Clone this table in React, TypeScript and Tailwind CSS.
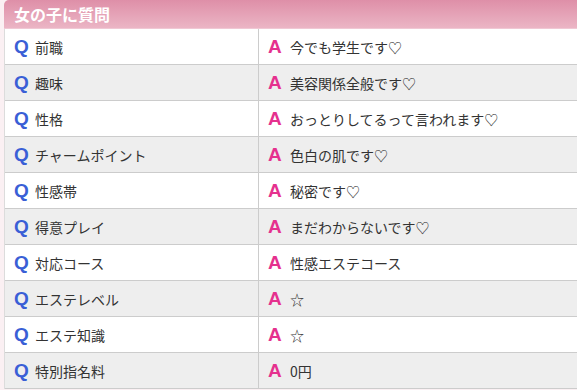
import React from "react";

const rows: [string, string][] = [
  ["前職", "今でも学生です♡"],
  ["趣味", "美容関係全般です♡"],
  ["性格", "おっとりしてるって言われます♡"],
  ["チャームポイント", "色白の肌です♡"],
  ["性感帯", "秘密です♡"],
  ["得意プレイ", "まだわからないです♡"],
  ["対応コース", "性感エステコース"],
  ["エステレベル", "☆"],
  ["エステ知識", "☆"],
  ["特別指名料", "0円"],
];

export default function App() {
  return (
    <div
      className="w-[577px] h-[390px] overflow-hidden bg-[#fbf0f3] pl-[4px]"
      style={{ fontFamily: '"Noto Sans CJK JP", "Liberation Sans", sans-serif' }}
    >
      <div className="h-[29px] rounded-tl-[5px] bg-gradient-to-b from-[#de8fa8] to-[#ebb5c5] flex items-center pl-[10px] border-b border-[#f0c8d4]">
        <span className="text-white font-bold text-[16px] leading-none">女の子に質問</span>
      </div>
      <div className="border-l border-[#dcdcdc]">
        {rows.map(([q, a], i) => (
          <div
            key={q}
            className={`grid grid-cols-[254px_1fr] h-[36px] border-b border-[#cccccc] ${i % 2 === 0 ? "bg-white" : "bg-[#eeeeee]"}`}
          >
            <div className="flex items-center pl-[9px] border-r border-[#cccccc]">
              <span className="text-[#3a5fd6] font-bold text-[19px] w-[21px] leading-none" style={{ fontFamily: '"Liberation Sans", sans-serif' }}>Q</span>
              <span className="text-[#333333] text-[14px] leading-none">{q}</span>
            </div>
            <div className="flex items-center pl-[9px]">
              <span className="text-[#e5318e] font-bold text-[19px] w-[22px] leading-none" style={{ fontFamily: '"Liberation Sans", sans-serif' }}>A</span>
              <span className="text-[#333333] text-[14px] leading-none">{a}</span>
            </div>
          </div>
        ))}
      </div>
    </div>
  );
}
